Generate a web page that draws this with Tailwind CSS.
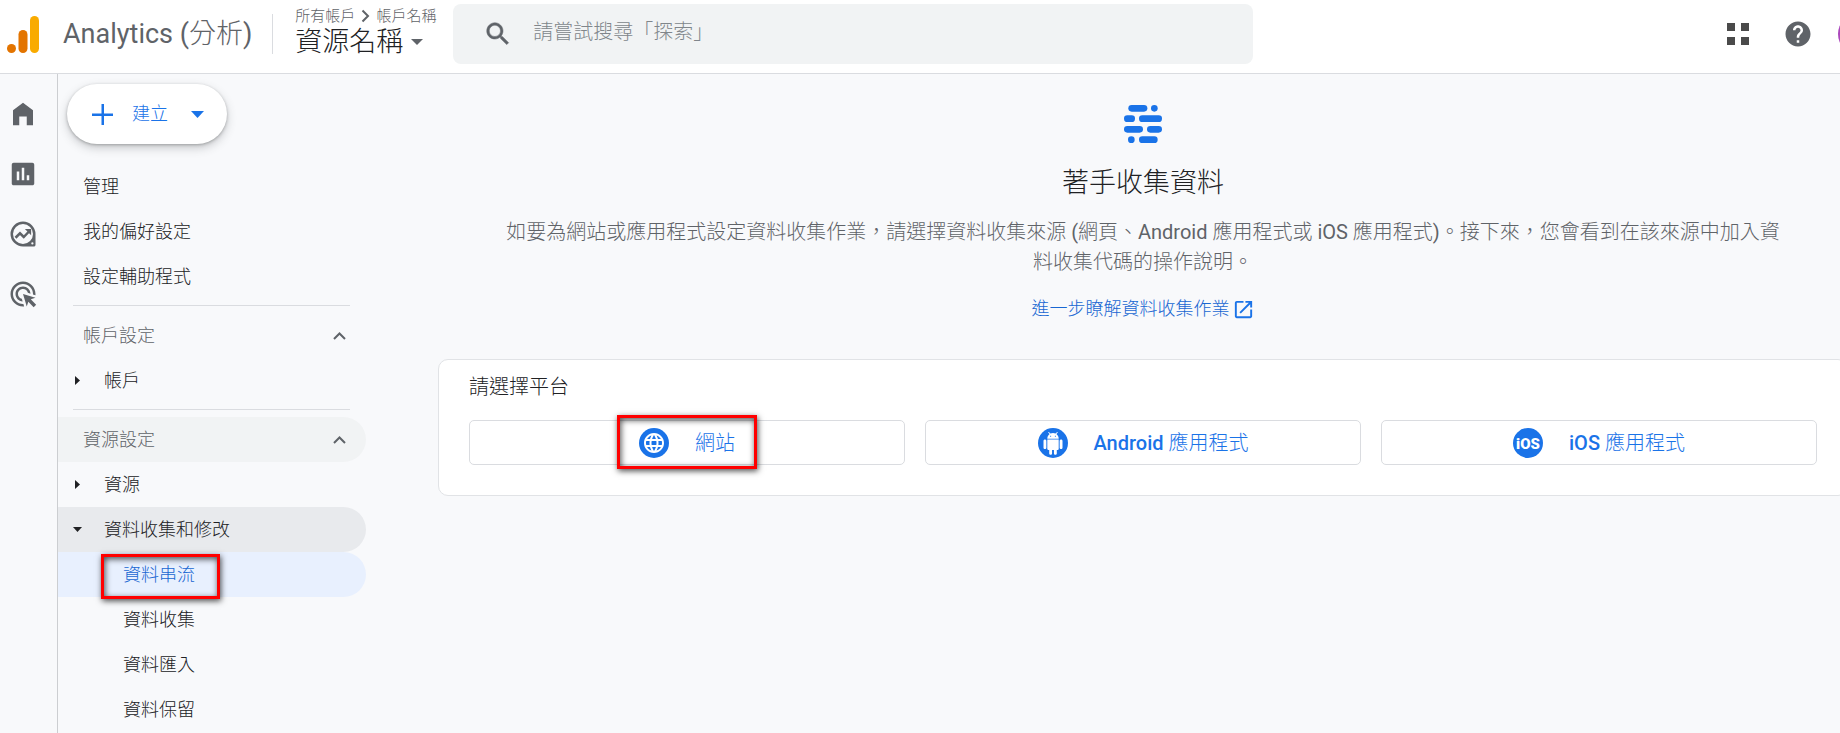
<!DOCTYPE html>
<html lang="zh-Hant">
<head>
  <meta charset="UTF-8" />
  <meta name="viewport" content="width=device-width, initial-scale=1.0" />
  <title>Analytics (分析)</title>
  <script src="https://cdn.jsdelivr.net/npm/@tailwindcss/browser@4"></script>
</head>
<body class="flex h-screen flex-col overflow-hidden bg-[#f8f9fb] font-['Roboto','Noto_Sans_CJK_TC_Light','Noto_Sans_CJK_TC',sans-serif] text-[#202124]">

  <!-- Top bar -->
  <header class="flex shrink-0 items-center border-b border-[#dadce0] bg-white pt-1 pb-[9px] pl-[7px]">
    <a href="#" class="flex items-center gap-6 text-[27px] leading-8 text-[#5f6368]">
      <svg class="h-[37px] w-8" viewBox="0 0 32 37">
        <circle cx="4.5" cy="32.5" r="4.5" fill="#e37400" />
        <rect x="11.5" y="14" width="9" height="23" rx="4.5" fill="#e37400" />
        <rect x="23" y="0" width="9" height="37" rx="4.5" fill="#f9ab00" />
      </svg>
      Analytics (分析)
    </a>
    <div class="ml-5 h-10 w-px bg-[#dadce0]"></div>
    <div class="ml-[22px] w-[158px] pb-1">
      <div class="flex items-center gap-1.5 text-[15px] leading-5 text-[#5f6368]">
        <span>所有帳戶</span>
        <svg class="h-[14px] w-[9px]" viewBox="0 0 9 14" fill="none" stroke="#5f6368" stroke-width="2"><path d="M1.500 1.500L7 7l-5.500 5.500" /></svg>
        <span>帳戶名稱</span>
      </div>
      <button type="button" class="flex items-center gap-2 text-[27px] leading-8">
        資源名稱
        <svg class="h-[6px] w-3" viewBox="0 0 12 6"><path d="M0 0h12L6 6z" fill="#5f6368" /></svg>
      </button>
    </div>
    <label class="flex h-[60px] w-[800px] items-center gap-5 rounded-lg bg-[#f1f3f4] pl-[30px]">
      <svg class="size-[30px] shrink-0" viewBox="0 0 24 24" fill="#5f6368" stroke="#5f6368" stroke-width=".4"><path d="M15.500 14h-.79l-.28-.27C15.410 12.590 16 11.110 16 9.500 16 5.910 13.090 3 9.500 3S3 5.910 3 9.500 5.910 16 9.500 16c1.610 0 3.090-.59 4.230-1.570l.27.28v.79l5 4.990L20.490 19l-4.990-5zm-6 0C7.010 14 5 11.990 5 9.500S7.010 5 9.500 5 14 7.010 14 9.500 11.990 14 9.500 14z" /></svg>
      <input type="text" placeholder="請嘗試搜尋「探索」" aria-label="搜尋" class="w-full bg-transparent pb-1 text-xl outline-none placeholder:text-[#80868b]" />
    </label>
    <div class="ml-auto flex items-center gap-[30px]">
      <button type="button" aria-label="應用程式">
        <svg class="size-[30px]" viewBox="0 0 30 30" fill="#4a4a4a"><path d="M4 4h8v8H4zM18 4h8v8h-8zM4 18h8v8H4zM18 18h8v8h-8z" /></svg>
      </button>
      <button type="button" aria-label="說明">
        <svg class="size-[30px]" viewBox="0 0 24 24" fill="#5f6368"><path d="M12 2C6.480 2 2 6.480 2 12s4.480 10 10 10 10-4.480 10-10S17.520 2 12 2zm1 17h-2v-2h2v2zm2.070-7.750l-.9.920C13.450 12.900 13 13.500 13 15h-2v-.5c0-1.100.45-2.100 1.170-2.830l1.240-1.260c.37-.36.59-.86.59-1.410 0-1.100-.9-2-2-2s-2 .9-2 2H8c0-2.210 1.790-4 4-4s4 1.790 4 4c0 .88-.36 1.680-.93 2.250z" /></svg>
      </button>
      <button type="button" aria-label="帳戶" class="-mr-[38px] -ml-[5px] size-10 rounded-full bg-[#ab47bc]"></button>
    </div>
  </header>

  <div class="flex min-h-0 grow">
    <!-- Icon rail -->
    <nav class="flex w-[58px] shrink-0 flex-col gap-[30px] border-r border-[#ccced1] pt-[25px] pl-2">
      <a href="#" aria-label="首頁">
        <svg class="size-[30px]" viewBox="0 0 24 24" fill="#5f6368"><path d="M4 21V9l8-6 8 6v12h-5v-7H9v7z" /></svg>
      </a>
      <a href="#" aria-label="報表">
        <svg class="size-[30px]" viewBox="0 0 24 24" fill="#5f6368"><path d="M19.500 3h-15C3.700 3 3 3.700 3 4.500v15c0 .8.7 1.500 1.500 1.500h15c.8 0 1.500-.7 1.500-1.500v-15c0-.8-.7-1.500-1.500-1.500zM9 17H7v-7h2v7zm4 0h-2V7h2v10zm4 0h-2v-4h2v4z" /></svg>
      </a>
      <a href="#" aria-label="探索">
        <svg class="size-[30px]" viewBox="0 0 24 24">
          <path fill="#5f6368" fill-rule="evenodd" d="M12 2a10 10 0 0 0 0 20h8.500c1 0 1.500-.6 1.500-1.500V12A10 10 0 0 0 12 2zm0 2a8 8 0 1 1 0 16 8 8 0 0 1 0-16zm7.500 14.600a.9.9 0 1 1 0 1.800.9.9 0 0 1 0-1.800z" />
          <path d="M6 15l3.600-3.600 3 3 4.400-4.600" fill="none" stroke="#5f6368" stroke-width="2" />
          <path d="M13.500 8H18.500v5z" fill="#5f6368" />
        </svg>
      </a>
      <a href="#" aria-label="廣告">
        <svg class="size-[30px]" viewBox="0 0 24 24" fill="#5f6368"><path d="M11.710 17.990C8.530 17.840 6 15.220 6 12c0-3.310 2.690-6 6-6 3.220 0 5.840 2.530 5.990 5.710l-2.100-.63C15.480 9.310 13.890 8 12 8c-2.210 0-4 1.790-4 4 0 1.890 1.310 3.480 3.080 3.890l.63 2.100zM22 12c0 .3-.01.6-.04.9l-1.970-.59c.01-.1.010-.21.010-.31 0-4.420-3.580-8-8-8s-8 3.580-8 8 3.580 8 8 8c.1 0 .21 0 .31-.01l.59 1.970c-.3.03-.6.04-.9.04C6.480 22 2 17.520 2 12S6.480 2 12 2s10 4.480 10 10zm-3.770 4.260L22 15l-10-3 3 10 1.260-3.770 4.270 4.270 1.980-1.980-4.280-4.260z" /></svg>
      </a>
    </nav>

    <!-- Admin menu -->
    <nav class="w-[308px] shrink-0 pt-[10px] text-lg">
      <button type="button" class="mb-5 ml-[9px] flex h-[60px] w-40 items-center rounded-full bg-white pl-[25px] text-[#1a73e8] shadow-[0_1px_3px_rgb(60_64_67/0.35),0_4px_10px_rgb(60_64_67/0.25)]">
        <svg class="size-[21px]" viewBox="0 0 21 21" fill="#1a73e8"><path d="M9.500 0h2.500v9.500h9v2.500h-9v9H9.500v-9H0V9.500h9.500z" /></svg>
        <span class="ml-[19px]">建立</span>
        <svg class="ml-[23px] h-[7px] w-[13px]" viewBox="0 0 13 7"><path d="M0 0h13L6.500 7z" fill="#1a73e8" /></svg>
      </button>

      <a href="#" class="flex h-[45px] items-center pl-[25px]">管理</a>
      <a href="#" class="flex h-[45px] items-center pl-[25px]">我的偏好設定</a>
      <a href="#" class="flex h-[45px] items-center pl-[25px]">設定輔助程式</a>
      <div class="mt-1.5 mr-4 mb-[7px] ml-[15px] h-px bg-[#dadce0]"></div>

      <button type="button" class="flex h-[45px] w-full items-center justify-between pr-5 pl-[25px] text-[#5f6368]">
        帳戶設定
        <svg class="h-2 w-[13px]" viewBox="0 0 13 8" fill="none" stroke="#5f6368" stroke-width="2"><path d="M1 7l5.500-5.500L12 7" /></svg>
      </button>
      <a href="#" class="flex h-[45px] items-center gap-6 pl-[17px]">
        <svg class="h-[9px] w-[5px]" viewBox="0 0 5 9"><path d="M0 0l5 4.500L0 9z" fill="#202124" /></svg>
        帳戶
      </a>
      <div class="mt-1.5 mr-4 mb-[7px] ml-[15px] h-px bg-[#dadce0]"></div>

      <button type="button" class="flex h-[45px] w-full items-center justify-between rounded-r-full bg-[#f1f3f4] pr-5 pl-[25px] text-[#5f6368]">
        資源設定
        <svg class="h-2 w-[13px]" viewBox="0 0 13 8" fill="none" stroke="#5f6368" stroke-width="2"><path d="M1 7l5.500-5.500L12 7" /></svg>
      </button>
      <a href="#" class="flex h-[45px] items-center gap-6 pl-[17px]">
        <svg class="h-[9px] w-[5px]" viewBox="0 0 5 9"><path d="M0 0l5 4.500L0 9z" fill="#202124" /></svg>
        資源
      </a>
      <a href="#" class="flex h-[45px] items-center gap-[22px] rounded-r-full bg-[#e8eaed] pl-[15px]">
        <svg class="h-[5px] w-[9px]" viewBox="0 0 9 5"><path d="M0 0h9L4.500 5z" fill="#202124" /></svg>
        資料收集和修改
      </a>
      <a href="#" class="relative flex h-[45px] items-center rounded-r-full bg-[#e8f0fe] pl-[65px] text-[#1967d2]">
        資料串流
        <span class="absolute top-0.5 left-[43px] h-[45px] w-[119px] border-3 border-[#ff0000] shadow-[1px_2px_6px_rgb(0_0_0/0.7),inset_1px_2px_6px_rgb(0_0_0/0.7)]"></span>
      </a>
      <a href="#" class="flex h-[45px] items-center pl-[65px]">資料收集</a>
      <a href="#" class="flex h-[45px] items-center pl-[65px]">資料匯入</a>
      <a href="#" class="flex h-[45px] items-center pl-[65px]">資料保留</a>
    </nav>

    <!-- Data collection -->
    <main class="-mr-2 ml-[72px] grow pt-[31px]">
      <div class="flex flex-col items-center px-[60px] text-center">
        <svg class="size-[38px]" viewBox="0 0 114 114" fill="#1a73e8">
          <rect x="13" y="0" width="57" height="20" rx="10" />
          <circle cx="91" cy="10" r="10" />
          <rect x="0" y="31" width="33" height="20" rx="10" />
          <rect x="45" y="31" width="69" height="20" rx="10" />
          <rect x="0" y="63" width="57" height="20" rx="10" />
          <rect x="69" y="63" width="45" height="20" rx="10" />
          <circle cx="22" cy="104" r="10" />
          <rect x="45" y="94" width="56" height="20" rx="10" />
        </svg>
        <h1 class="mt-[22px] text-[27px] leading-9">著手收集資料</h1>
        <p class="mt-4 text-xl leading-[30px] text-[#5f6368]">如要為網站或應用程式設定資料收集作業，請選擇資料收集來源 (網頁、Android 應用程式或 iOS 應用程式)。接下來，您會看到在該來源中加入資料收集代碼的操作說明。</p>
        <a href="#" class="mt-[18px] flex items-center gap-0.5 text-lg leading-7 text-[#1967d2]">
          進一步瞭解資料收集作業
          <svg class="size-[23px]" viewBox="0 0 24 24" fill="#1a73e8"><path d="M19 19H5V5h7V3H5c-1.110 0-2 .9-2 2v14c0 1.100.89 2 2 2h14c1.100 0 2-.9 2-2v-7h-2v7zM14 3v2h3.590l-9.830 9.830 1.410 1.410L19 6.410V10h2V3h-7z" /></svg>
        </a>
      </div>

      <section class="mt-9 rounded-[10px] border border-[#e1e3e6] bg-white px-[30px] pt-3 pb-[30px]">
        <h2 class="text-xl leading-[30px]">請選擇平台</h2>
        <div class="mt-[18px] grid grid-cols-3 gap-5 text-xl text-[#1a73e8]">
          <button type="button" class="relative flex h-[45px] items-center justify-center gap-[26px] rounded-[5px] border border-[#dadce0]">
            <svg class="size-[30px]" viewBox="0 0 30 30">
              <circle cx="15" cy="15" r="15" fill="#1a73e8" />
              <path transform="translate(3 3)" fill="#fff" d="M11.990 2C6.470 2 2 6.480 2 12s4.470 10 9.990 10C17.520 22 22 17.520 22 12S17.520 2 11.990 2zm6.930 6h-2.950c-.32-1.250-.78-2.450-1.380-3.560 1.840.63 3.370 1.910 4.330 3.560zM12 4.040c.83 1.200 1.480 2.530 1.910 3.960h-3.820c.43-1.430 1.080-2.760 1.910-3.960zM4.260 14C4.100 13.360 4 12.690 4 12s.1-1.360.26-2h3.380c-.08.66-.14 1.320-.14 2s.06 1.340.14 2H4.260zm.82 2h2.950c.32 1.250.78 2.450 1.380 3.560-1.840-.63-3.370-1.900-4.330-3.560zm2.950-8H5.080c.96-1.660 2.490-2.930 4.330-3.560C8.810 5.550 8.350 6.750 8.030 8zM12 19.960c-.83-1.200-1.480-2.530-1.910-3.960h3.820c-.43 1.430-1.080 2.760-1.910 3.960zM14.340 14H9.660c-.09-.66-.16-1.320-.16-2s.07-1.350.16-2h4.680c.09.65.16 1.320.16 2s-.07 1.340-.16 2zm.25 5.560c.6-1.110 1.060-2.310 1.380-3.560h2.950c-.96 1.650-2.490 2.930-4.330 3.560zM16.360 14c.08-.66.14-1.320.14-2s-.06-1.340-.14-2h3.380c.16.64.26 1.310.26 2s-.1 1.360-.26 2h-3.380z" />
            </svg>
            <span>網站</span>
            <span class="absolute inset-x-0 -top-1.5 mx-auto h-[54px] w-[140px] border-3 border-[#ff0000] shadow-[1px_2px_6px_rgb(0_0_0/0.7),inset_1px_2px_6px_rgb(0_0_0/0.7)]"></span>
          </button>
          <button type="button" class="flex h-[45px] items-center justify-center gap-[26px] rounded-[5px] border border-[#dadce0]">
            <svg class="size-[30px]" viewBox="0 0 30 30">
              <circle cx="15" cy="15" r="15" fill="#1a73e8" />
              <path transform="translate(3.600 4) scale(.95)" fill="#fff" d="M6 18c0 .55.45 1 1 1h1v3.500c0 .83.67 1.500 1.500 1.500s1.500-.67 1.500-1.500V19h2v3.500c0 .83.67 1.500 1.500 1.500s1.500-.67 1.500-1.500V19h1c.55 0 1-.45 1-1V8H6v10zM3.500 8C2.670 8 2 8.670 2 9.500v7c0 .83.67 1.500 1.500 1.500S5 17.330 5 16.500v-7C5 8.670 4.330 8 3.500 8zm17 0c-.83 0-1.500.67-1.500 1.500v7c0 .83.67 1.500 1.500 1.500s1.500-.67 1.500-1.500v-7c0-.83-.67-1.500-1.500-1.500zm-4.970-5.840l1.300-1.300c.2-.2.2-.51 0-.71-.2-.2-.51-.2-.71 0l-1.480 1.480C13.850 1.230 12.950 1 12 1c-.96 0-1.860.23-2.660.63L7.850.15c-.2-.2-.51-.2-.71 0-.2.2-.2.51 0 .71l1.310 1.310C6.970 3.260 6 5.010 6 7h12c0-1.990-.97-3.750-2.470-4.840zM10 5H9V4h1v1zm5 0h-1V4h1v1z" />
            </svg>
            <span><span class="font-medium">Android</span> 應用程式</span>
          </button>
          <button type="button" class="flex h-[45px] items-center justify-center gap-[26px] rounded-[5px] border border-[#dadce0]">
            <svg class="size-[30px]" viewBox="0 0 30 30">
              <circle cx="15" cy="15" r="15" fill="#1a73e8" />
              <text x="15" y="21" text-anchor="middle" font-size="15" font-weight="900" font-family="Roboto, sans-serif" fill="#fff">iOS</text>
            </svg>
            <span><span class="font-medium">iOS</span> 應用程式</span>
          </button>
        </div>
      </section>
    </main>
  </div>

</body>
</html>
